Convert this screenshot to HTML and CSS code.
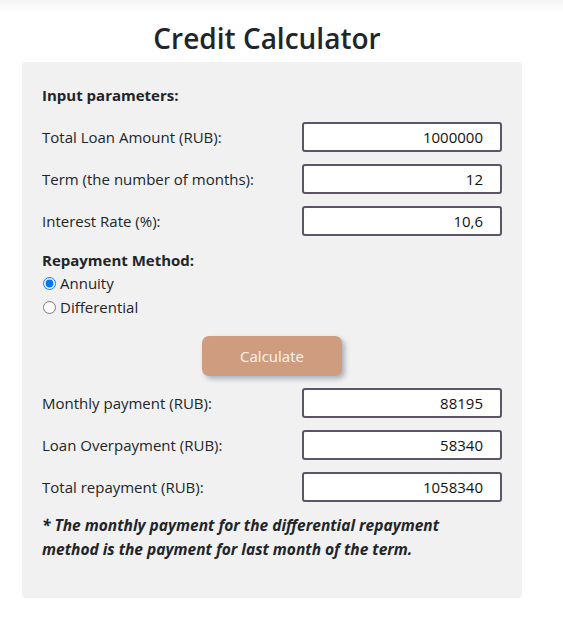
FILE: index.html
```html
<!DOCTYPE html>
<html lang="en">
<head>
<meta charset="utf-8">
<title>Credit Calculator</title>
<link rel="stylesheet" href="styles.css">
</head>
<body>
<main class="page">
  <h1 class="title">Credit Calculator</h1>
  <section class="card">
    <div class="section-label">Input parameters:</div>
    <div class="rows">
      <label class="row"><span class="row-label">Total Loan Amount (RUB):</span><input class="field" type="text" value="1000000"></label>
      <label class="row"><span class="row-label">Term (the number of months):</span><input class="field" type="text" value="12"></label>
      <label class="row"><span class="row-label">Interest Rate (%):</span><input class="field" type="text" value="10,6"></label>
    </div>
    <div class="section-label method-label">Repayment Method:</div>
    <div class="radios">
      <label class="radio"><input type="radio" name="method" checked> Annuity</label>
      <label class="radio"><input type="radio" name="method"> Differential</label>
    </div>
    <div class="actions"><button class="calc" type="button">Calculate</button></div>
    <div class="rows results">
      <label class="row"><span class="row-label">Monthly payment (RUB):</span><input class="field" type="text" value="88195"></label>
      <label class="row"><span class="row-label">Loan Overpayment (RUB):</span><input class="field" type="text" value="58340"></label>
      <label class="row"><span class="row-label">Total repayment (RUB):</span><input class="field" type="text" value="1058340"></label>
    </div>
    <p class="note">* The monthly payment for the differential repayment method is the payment for last month of the term.</p>
  </section>
</main>
</body>
</html>
```

FILE: styles.css
```css
html {
  background: #ffffff linear-gradient(#f5f5f5, #ffffff 12px) no-repeat;
}
body {
  margin: 0;
  font-family: "Open Sans", "Noto Sans", sans-serif;
  color: #212529;
  font-size: 15px;
}
.page {
  width: 500px;
  margin-left: 22px;
  padding-top: 18px;
}
.title {
  margin: 0;
  height: 44px;
  text-align: center;
  font-size: 28px;
  font-weight: 600;
  line-height: 40px;
  padding-right: 10px;
}
.card {
  background: #f1f1f1;
  border-radius: 4px;
  padding: 21px 20px 37px;
  display: flex;
  flex-direction: column;
}
.section-label {
  font-weight: 700;
  line-height: 24px;
}
.rows {
  display: flex;
  flex-direction: column;
  gap: 12px;
  margin-top: 15px;
}
.row {
  display: flex;
  align-items: center;
  justify-content: space-between;
  height: 30px;
}
.field {
  box-sizing: border-box;
  width: 200px;
  height: 30px;
  margin: 0;
  border: 2px solid #5b5566;
  border-radius: 3px;
  background: #fff;
  padding: 0 17px 0 4px;
  text-align: right;
  font: inherit;
  color: #111;
}
.method-label {
  margin-top: 12px;
}
.radios {
  display: flex;
  flex-direction: column;
  margin-top: -1px;
}
.radio {
  display: flex;
  align-items: center;
  line-height: 24px;
}
.radio input {
  margin: 0 4px 0 1px;
  width: 13px;
  height: 13px;
}
.actions {
  display: flex;
  justify-content: center;
  margin-top: 17px;
}
.calc {
  width: 140px;
  height: 40px;
  border: none;
  border-radius: 7px;
  background: #d09c80;
  color: #fbf5f1;
  font: inherit;
  font-size: 15px;
  box-shadow: 3px 3px 5px rgba(90, 100, 120, 0.45);
}
.results {
  margin-top: 12px;
}
.note {
  margin: 11px 0 0;
  padding-right: 40px;
  font-weight: 700;
  font-style: italic;
  font-size: 15.5px;
  line-height: 24px;
}
```
